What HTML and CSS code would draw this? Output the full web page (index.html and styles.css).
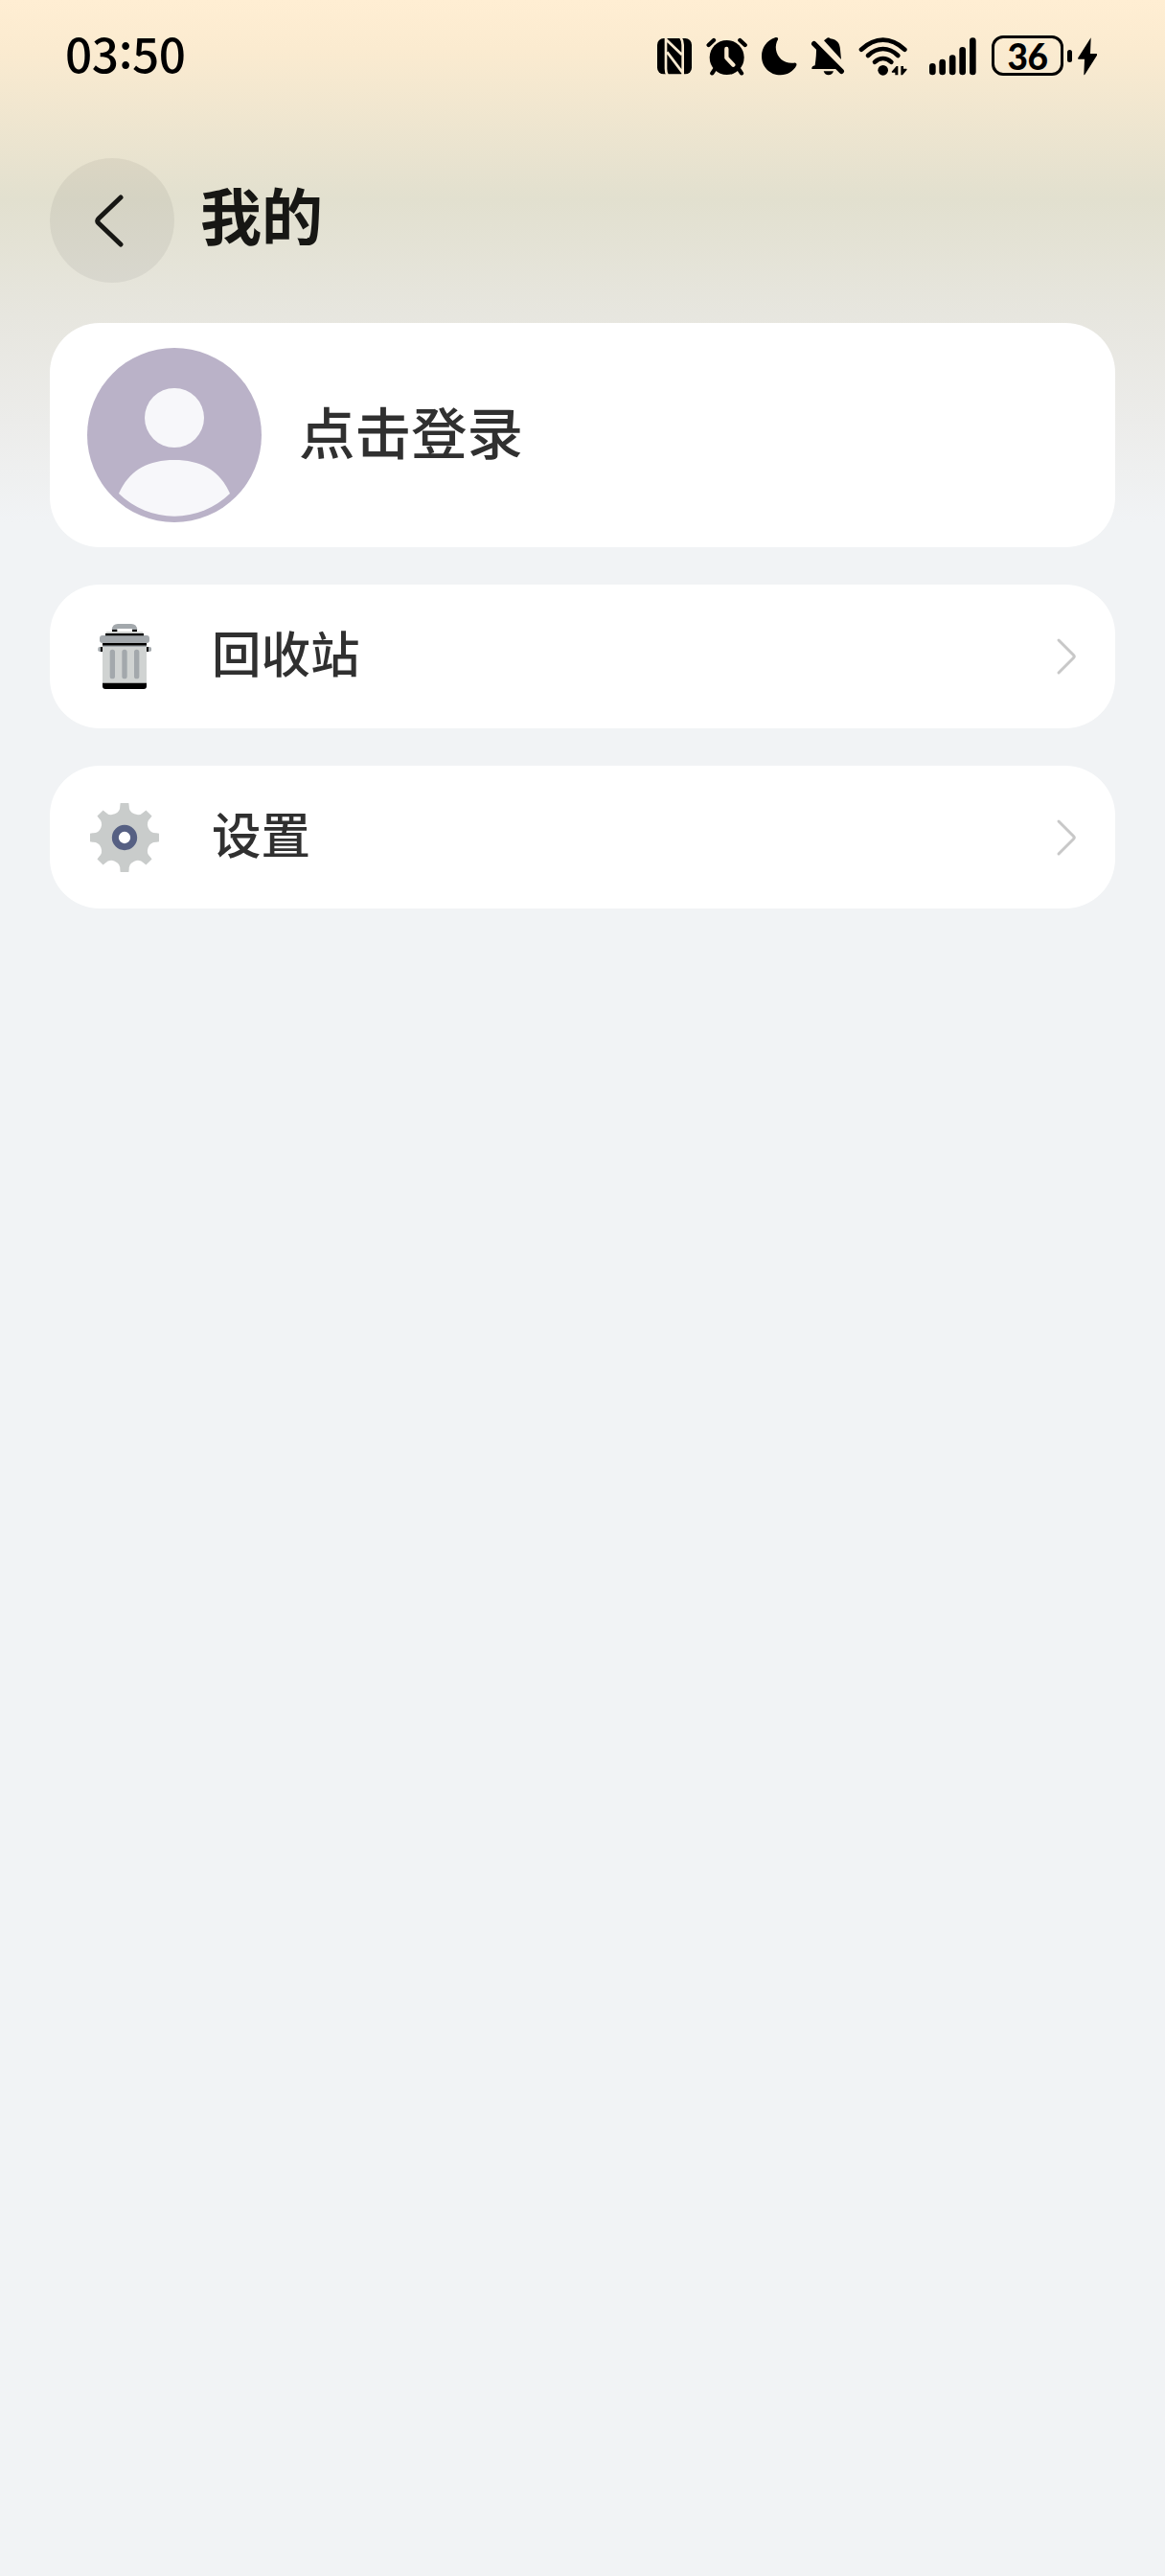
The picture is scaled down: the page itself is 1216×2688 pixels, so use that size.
FILE: index.html
```html
<!DOCTYPE html>
<html lang="zh-CN">
<head>
<meta charset="utf-8">
<title>我的</title>
<link rel="stylesheet" href="styles.css">
</head>
<body>
<div class="status-bar">
  <span class="clock">03<span class="colon">:</span>50</span>
  <div class="status-icons">
    <svg class="nfc" width="38" height="47" viewBox="45 30 114 141">
      <rect x="48" y="45" width="108" height="112" rx="20"/>
      <path d="M75 42V140Q75 152 80 160M75 48L125 96M79 88L127 152M128 160V66Q128 52 121 42" class="nfc-cut"/>
    </svg>
    <svg class="alarm" width="43" height="47" viewBox="201 30 129 141">
      <circle cx="266" cy="105" r="54"/>
      <path d="M209 66L225 51M323 66L307 51M228 142L220 154M304 142L312 154" class="line w13"/>
      <path d="M265 78V106L286 128" class="cut w13"/>
    </svg>
    <svg class="moon" width="39" height="47" viewBox="372 30 117 141">
      <path d="M417 43C391 51 375 75 375 101C375 134 401 160 434 160C456 160 475 148 484 130C486 124 482 121 476 122C448 126 424 107 420 81C418 69 421 58 426 49C428 44 423 41 417 43Z"/>
    </svg>
    <svg class="bell" width="36" height="47" viewBox="48 30 108 141">
      <path d="M66 71L132 141H52Q51 132 62 130Q67 95 66 71Z"/>
      <path d="M90 52L98 46Q104 40 110 46C132 49 140 62 141 80L144 111Z"/>
      <path d="M89 148H120Q116 160 104 160Q93 160 89 148Z"/>
      <path d="M59 62L145 148" class="line w16"/>
    </svg>
    <svg class="wifi" width="52" height="47" viewBox="198 30 156 141">
      <path d="M207 80Q240 50 275 50T343 80" class="line w14"/>
      <path d="M228 99Q250 78 275 78T322 99" class="line w14"/>
      <path d="M249 119Q262 108 275 108T301 119" class="line w14"/>
      <circle cx="275" cy="145" r="16"/>
      <path d="M302 149L317 132H322V160H313V152H303ZM350 143L336 160H331V132H339V140H349Z"/>
    </svg>
    <svg class="signal" width="49" height="47" viewBox="420 30 147 141">
      <path d="M430 133V150M461 120V150M492.500 107V150M524 82V150M556 53V150" class="line w20"/>
    </svg>
    <div class="battery"><span class="battery-body">36</span><i class="battery-cap"></i></div>
    <svg class="bolt" width="20" height="47" viewBox="405 30 60 141">
      <path d="M446 43L405 107Q404 110 408 110H426L424 159Q425 161 428 157L465 98Q467 93 462 93H444Z"/>
    </svg>
  </div>
</div>

<header class="header">
  <button class="back" aria-label="返回">
    <svg width="130" height="130" viewBox="0 0 130 130"><path d="M74 41L51 63Q48.500 65.500 51 68L74 90"/></svg>
  </button>
  <h1>我的</h1>
</header>

<main class="list">
  <a class="card profile">
    <svg class="avatar" width="182" height="182" viewBox="0 0 182 182">
      <circle cx="91" cy="91" r="91" fill="#bab2c8"/>
      <circle cx="91" cy="73" r="31" fill="#f7f7fa"/>
      <path d="M33 152C43 129 62 117 91 117S139 129 149 152A83 83 0 0 1 33 152Z" fill="#f7f7fa"/>
    </svg>
    <span>点击登录</span>
  </a>
  <a class="card row">
    <svg class="icon" width="78" height="78" viewBox="153 138 234 234">
      <rect x="187" y="225" width="167" height="15" rx="5" fill="#a3a8ac"/>
      <path d="M195 225H201V240H195ZM339 225H345V240H339Z"/>
      <path d="M201 220H339V344H201Z" fill="#d0d3d2"/>
      <path d="M201 338H339V348Q339 357 330 357H210Q201 357 201 348Z"/>
      <path d="M232 241V317M270 241V317M308 241V317" fill="none" stroke="#a3a8ac" stroke-width="16" stroke-linecap="round"/>
      <path d="M201 213H339V221H201Z"/>
      <path d="M201 221H339V225H201Z" fill="#a3a8ac"/>
      <path d="M231 170H309V178H231Z"/>
      <path d="M230 171Q232 153 249 153H291Q308 153 310 171H294V168H247V171Z" fill="#a3a8ac"/>
      <rect x="247" y="168" width="47" height="10" fill="#fff"/>
      <path d="M214 178H326L331 185H209Z" fill="#d0d3d2"/>
      <rect x="192" y="189" width="156" height="24" rx="9" fill="#a3a8ac"/>
      <path d="M210 183H330V190H210Z"/>
    </svg>
    <span>回收站</span>
    <svg class="chevron" width="24" height="42" viewBox="0 0 24 42"><path d="M4 4L19.500 19.500Q21 21 19.500 22.500L4 38"/></svg>
  </a>
  <a class="card row">
    <svg class="icon" width="78" height="78" viewBox="-117 -117 234 234">
      <path fill="#c9cccb" d="M-14-100L-13-108H13L14-100A27 27 0 0 0 60.800-80.600L67.200-85.600L85.600-67.200L80.600-60.800A27 27 0 0 0 100-14L108-13V13L100 14A27 27 0 0 0 80.600 60.800L85.600 67.200L67.200 85.600L60.800 80.600A27 27 0 0 0 14 100L13 108H-13L-14 100A27 27 0 0 0-60.800 80.600L-67.200 85.600L-85.600 67.200L-80.600 60.800A27 27 0 0 0-100 14L-108 13V-13L-100-14A27 27 0 0 0-80.600-60.800L-85.600-67.200L-67.200-85.600L-60.800-80.600A27 27 0 0 0-14-100Z"/>
      <circle r="29" fill="#fff" stroke="#566083" stroke-width="21"/>
    </svg>
    <span>设置</span>
    <svg class="chevron" width="24" height="42" viewBox="0 0 24 42"><path d="M4 4L19.500 19.500Q21 21 19.500 22.500L4 38"/></svg>
  </a>
</main>
</body>
</html>
```

FILE: styles.css
```css
* { box-sizing: border-box; }
body {
  margin: 0;
  min-height: 2688px;
  background: #f1f3f5 linear-gradient(#ffeed3 0, #fbebd0 50px, #e2e0cf 208px, #e7e6df 330px, #ececea 440px, #f1f3f5 545px) no-repeat 0 0 / 100% 545px;
  font-family: "Noto Sans CJK SC", sans-serif;
  color: #303030;
}
svg { display: block; flex: none; }

.status-bar { display: flex; justify-content: space-between; height: 117px; padding: 0 71px 0 68px; color: #000; }
.clock { font-size: 49.500px; font-weight: 500; line-height: 74px; letter-spacing: -.4px; padding-top: 18px; }
.colon { display: inline-block; transform: translateY(-5px); }
.status-icons { display: flex; align-items: center; height: 47px; margin-top: 35px; }
.alarm, .moon, .wifi { margin-left: 14px; }
.bell { margin-left: 13px; }
.signal { margin-left: 22px; }
.battery { display: flex; align-items: center; gap: 4px; height: 47px; margin-left: 16px; padding-bottom: 1px; }
.battery-body {
  width: 75px; height: 42px; border: 3px solid #000; border-radius: 12px;
  font: 900 37px/37px Lato, sans-serif; text-align: center; letter-spacing: -.5px;
}
.battery-cap { width: 5px; height: 13px; border-radius: 3px; background: #000; }
.bolt { margin-left: 6px; }
.line { fill: none; stroke: #000; stroke-linecap: round; stroke-linejoin: round; }
.cut { fill: none; stroke: #f9ead0; stroke-linecap: round; stroke-linejoin: round; }
.nfc-cut { fill: none; stroke: #f9ead0; stroke-width: 8px; }
.w13 { stroke-width: 13px; }
.w14 { stroke-width: 14px; }
.w16 { stroke-width: 16px; }
.w20 { stroke-width: 20px; }

.header { display: flex; align-items: center; gap: 27px; height: 220px; padding: 6px 52px 0; }
.back { flex: none; width: 130px; height: 130px; padding: 0; border: 0; border-radius: 50%; background: rgba(0, 0, 0, .055); }
.back path { fill: none; stroke: #171714; stroke-width: 5px; stroke-linecap: round; }
h1 { margin: 0; padding-bottom: 16px; font-size: 64px; font-weight: 700; line-height: 90px; color: #171714; }

.list { display: flex; flex-direction: column; gap: 39px; padding: 0 52px; }
.card { display: flex; align-items: center; background: #fff; border-radius: 52px; }
.profile { height: 234px; padding-left: 39px; gap: 39px; font-size: 58.500px; font-weight: 500; line-height: 80px; }
.profile span { padding-bottom: 11px; }
.row { height: 150px; padding: 0 39px; font-size: 51.500px; font-weight: 500; line-height: 72px; }
.row + .row { height: 149px; }
.row span { flex: 1; margin-left: 52px; padding-bottom: 10px; }
.chevron path { fill: none; stroke: #c8c8c8; stroke-width: 3px; stroke-linecap: round; }
```
